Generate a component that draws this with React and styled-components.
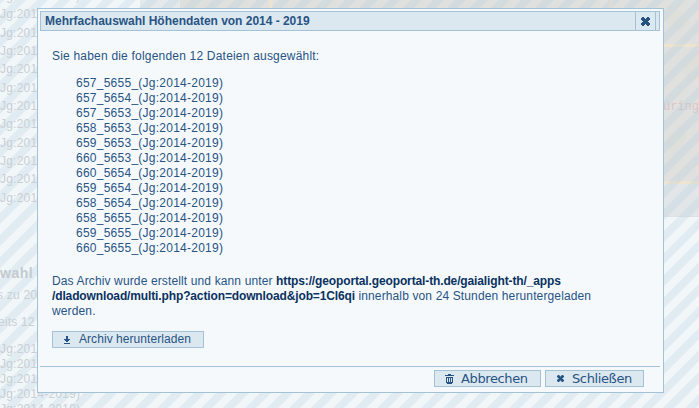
import React from 'react';
import styled, { createGlobalStyle, css } from 'styled-components';

const Global = createGlobalStyle`
  body { margin: 0; overflow: hidden; background: #f1f6f9; }
  * { box-sizing: border-box; }
`;

const Page = styled.div`
  position: relative;
  width: 699px;
  height: 408px;
  overflow: hidden;
  background: #f1f6f9;
  font: 12px/15px "Liberation Sans", Arial, sans-serif;
  color: #285484;
`;

const MapView = styled.div`
  position: absolute;
  left: 140px;
  top: 0;
  width: 559px;
  height: 217px;
  background: linear-gradient(#e0e1df 0 183px, #e2e6e9 183px 216px, #dce1e5 216px);
`;

const MapRoads = styled.svg`
  display: block;
  width: 559px;
  height: 217px;
`;

const Stripes = styled.svg`
  position: absolute;
  inset: 0;
  width: 699px;
  height: 408px;
`;

const Sidebar = styled.div`
  position: absolute;
  left: 0;
  top: -13px;
  width: 130px;
  color: #c9cfd5;
  white-space: nowrap;
  letter-spacing: 0.22px;
`;

const FileRow = styled.div`
  height: 18.35px;
  line-height: 18px;
`;

const SideTitle = styled.div`
  margin-top: 57px;
  font-size: 14px;
  line-height: 18px;
  font-weight: bold;
  letter-spacing: 0.5px;
  color: #c3cad0;
`;

const SideText = styled.div`
  height: 15px;
  margin-top: ${(p) => p.$gap}px;
  margin-left: ${(p) => p.$shift || 0}px;
`;

const Dialog = styled.section`
  position: absolute;
  left: 37px;
  top: 8px;
  width: 627px;
  height: 385px;
  padding: 2px 3px 0 2px;
  display: flex;
  flex-direction: column;
  border: 1px solid #a3c2d6;
  background: #f5f9fc;
`;

const TitleBar = styled.header`
  display: flex;
  height: 20px;
  flex: none;
  padding-right: 3px;
  border: 1px solid #a3c2d6;
  background: #dce8f0;
`;

const Title = styled.h1`
  flex: 1;
  margin: 0;
  padding-left: 4px;
  font-size: 12px;
  line-height: 18px;
  font-weight: bold;
  letter-spacing: -0.02px;
`;

const CloseButton = styled.button`
  width: 21px;
  height: 18px;
  padding: 1px 0 0 5px;
  border: solid #a3c2d6;
  border-width: 0 1px;
  background: transparent;
  color: #26527f;
  display: flex;
  align-items: center;
`;

const Content = styled.div`
  flex: 1;
  padding: 18px 12px 0;
`;

const Paragraph = styled.p`
  margin: 0;
  white-space: nowrap;
  letter-spacing: ${(p) => p.$spacing}px;
`;

const Files = styled.ul`
  list-style: none;
  margin: 12px 0 18px;
  padding: 0 0 0 24px;
  letter-spacing: 0.25px;
`;

const Link = styled.b`
  color: #0a3260;
  letter-spacing: -0.13px;
`;

const Button = styled.button`
  display: flex;
  align-items: center;
  width: ${(p) => p.$width}px;
  height: 17px;
  padding: 0 0 0 ${(p) => p.$inset}px;
  gap: ${(p) => p.$gap}px;
  border: 1px solid #a3c2d6;
  background: #dce8f0;
  color: #285484;
  font: 12px/15px "Liberation Sans", Arial, sans-serif;
  letter-spacing: 0.06px;
  white-space: nowrap;
  ${(p) => p.$wide && css`
    font: 13px/15px "DejaVu Sans", Verdana, sans-serif;
    letter-spacing: -0.38px;
  `}
`;

const DownloadRow = styled.div`
  margin-top: 12px;
`;

const Footer = styled.footer`
  display: flex;
  justify-content: flex-end;
  gap: 4px;
  height: 26px;
  flex: none;
  padding: 3px 16px 0 0;
  border-top: 1px solid #a3c2d6;
`;

const Icon = styled.svg`
  flex: none;
  fill: currentColor;
`;

const Cross = ({ size }) => (
  <Icon width={size} height={size} viewBox="0 0 9 9">
    <path d="M1 0h2v1h1v1h1V1h1V0h2v1h1v2H8v1H7v1h1v1h1v2H8v1H6V8H5V7H4v1H3v1H1V8H0V6h1V5h1V4H1V3H0V1h1z" />
  </Icon>
);

const Download = () => (
  <Icon width="6" height="8" viewBox="0 0 6 8" shapeRendering="crispEdges">
    <path d="M2 0h2v3h2v1H5v1H4v1H2V5H1V4H0V3h2zM0 7h6v1H0z" />
  </Icon>
);

const Trash = () => (
  <Icon width="9" height="10" viewBox="0 0 9 10" shapeRendering="crispEdges">
    <path fillRule="evenodd" d="M3 0h3v1h3v1H0V1h3zM1 3h7v6H7v1H2V9H1zM2 4v4h1V4zM4 4v4h1V4zM6 4v4h1V4z" />
  </Icon>
);

const files = ['657_5655', '657_5654', '657_5653', '658_5653', '659_5653', '660_5653', '660_5654', '659_5654', '658_5654', '658_5655', '659_5655', '660_5655'];

export default function App() {
  return (
    <Page>
      <Global />
      <MapView>
        <MapRoads>
          <path d="M0 0H40V9H0z" fill="#e4eaec" />
          <path d="M40 0H70V9H40z" fill="#dfe0dd" />
          <path d="M524 20l14-12 12 14-9 10zM540 60l19-8v26l-11 6zM524 140l16-16 8 12-14 20z" fill="#dedfdb" />
          <path d="M131 0V8M471 0V8M523 45.5H559M523 182.5H559" stroke="#f0e5cc" strokeWidth="2.5" fill="none" />
          <text x="523" y="110" fill="#dcc4c6" fontFamily="Liberation Mono, monospace" fontSize="12">üring</text>
        </MapRoads>
      </MapView>
      <Stripes>
        <defs>
          <pattern id="diagonals" x="15" width="22" height="22" patternUnits="userSpaceOnUse">
            <path d="M0 0H11L0 11zM22 0V11L11 22H0z" fill="#a5cadb" fillOpacity=".21" />
          </pattern>
        </defs>
        <rect width="699" height="408" fill="url(#diagonals)" />
      </Stripes>
      <Sidebar>
        {Array.from({ length: 12 }, (_, i) => <FileRow key={i}>Jg:2014-2019)</FileRow>)}
        <SideTitle>wahl</SideTitle>
        <SideText $gap={6} $shift={-3}>s zu 20</SideText>
        <SideText $gap={12} $shift={-2}>eits 12</SideText>
        <SideText $gap={12}>Jg:2014-2019)</SideText>
        {[1, 2, 3, 4].map((n) => <SideText key={n} $gap={0}>Jg:2014-2019)</SideText>)}
      </Sidebar>
      <Dialog>
        <TitleBar>
          <Title>Mehrfachauswahl Höhendaten von 2014 - 2019</Title>
          <CloseButton aria-label="Schließen"><Cross size={9} /></CloseButton>
        </TitleBar>
        <Content>
          <Paragraph $spacing={0.2}>Sie haben die folgenden 12 Dateien ausgewählt:</Paragraph>
          <Files>{files.map((f) => <li key={f}>{f}_(Jg:2014-2019)</li>)}</Files>
          <Paragraph $spacing={0.13}>
            Das Archiv wurde erstellt und kann unter <Link>https://geoportal.geoportal-th.de/gaialight-th/_apps<br />/dladownload/multi.php?action=download&amp;job=1Cl6qi</Link> innerhalb von 24 Stunden heruntergeladen<br />werden.
          </Paragraph>
          <DownloadRow>
            <Button $width={152} $inset={11} $gap={9}><Download />Archiv herunterladen</Button>
          </DownloadRow>
        </Content>
        <Footer>
          <Button $wide $width={107} $inset={10} $gap={7}><Trash />Abbrechen</Button>
          <Button $wide $width={99} $inset={11} $gap={8}><Cross size={7} />Schließen</Button>
        </Footer>
      </Dialog>
    </Page>
  );
}
